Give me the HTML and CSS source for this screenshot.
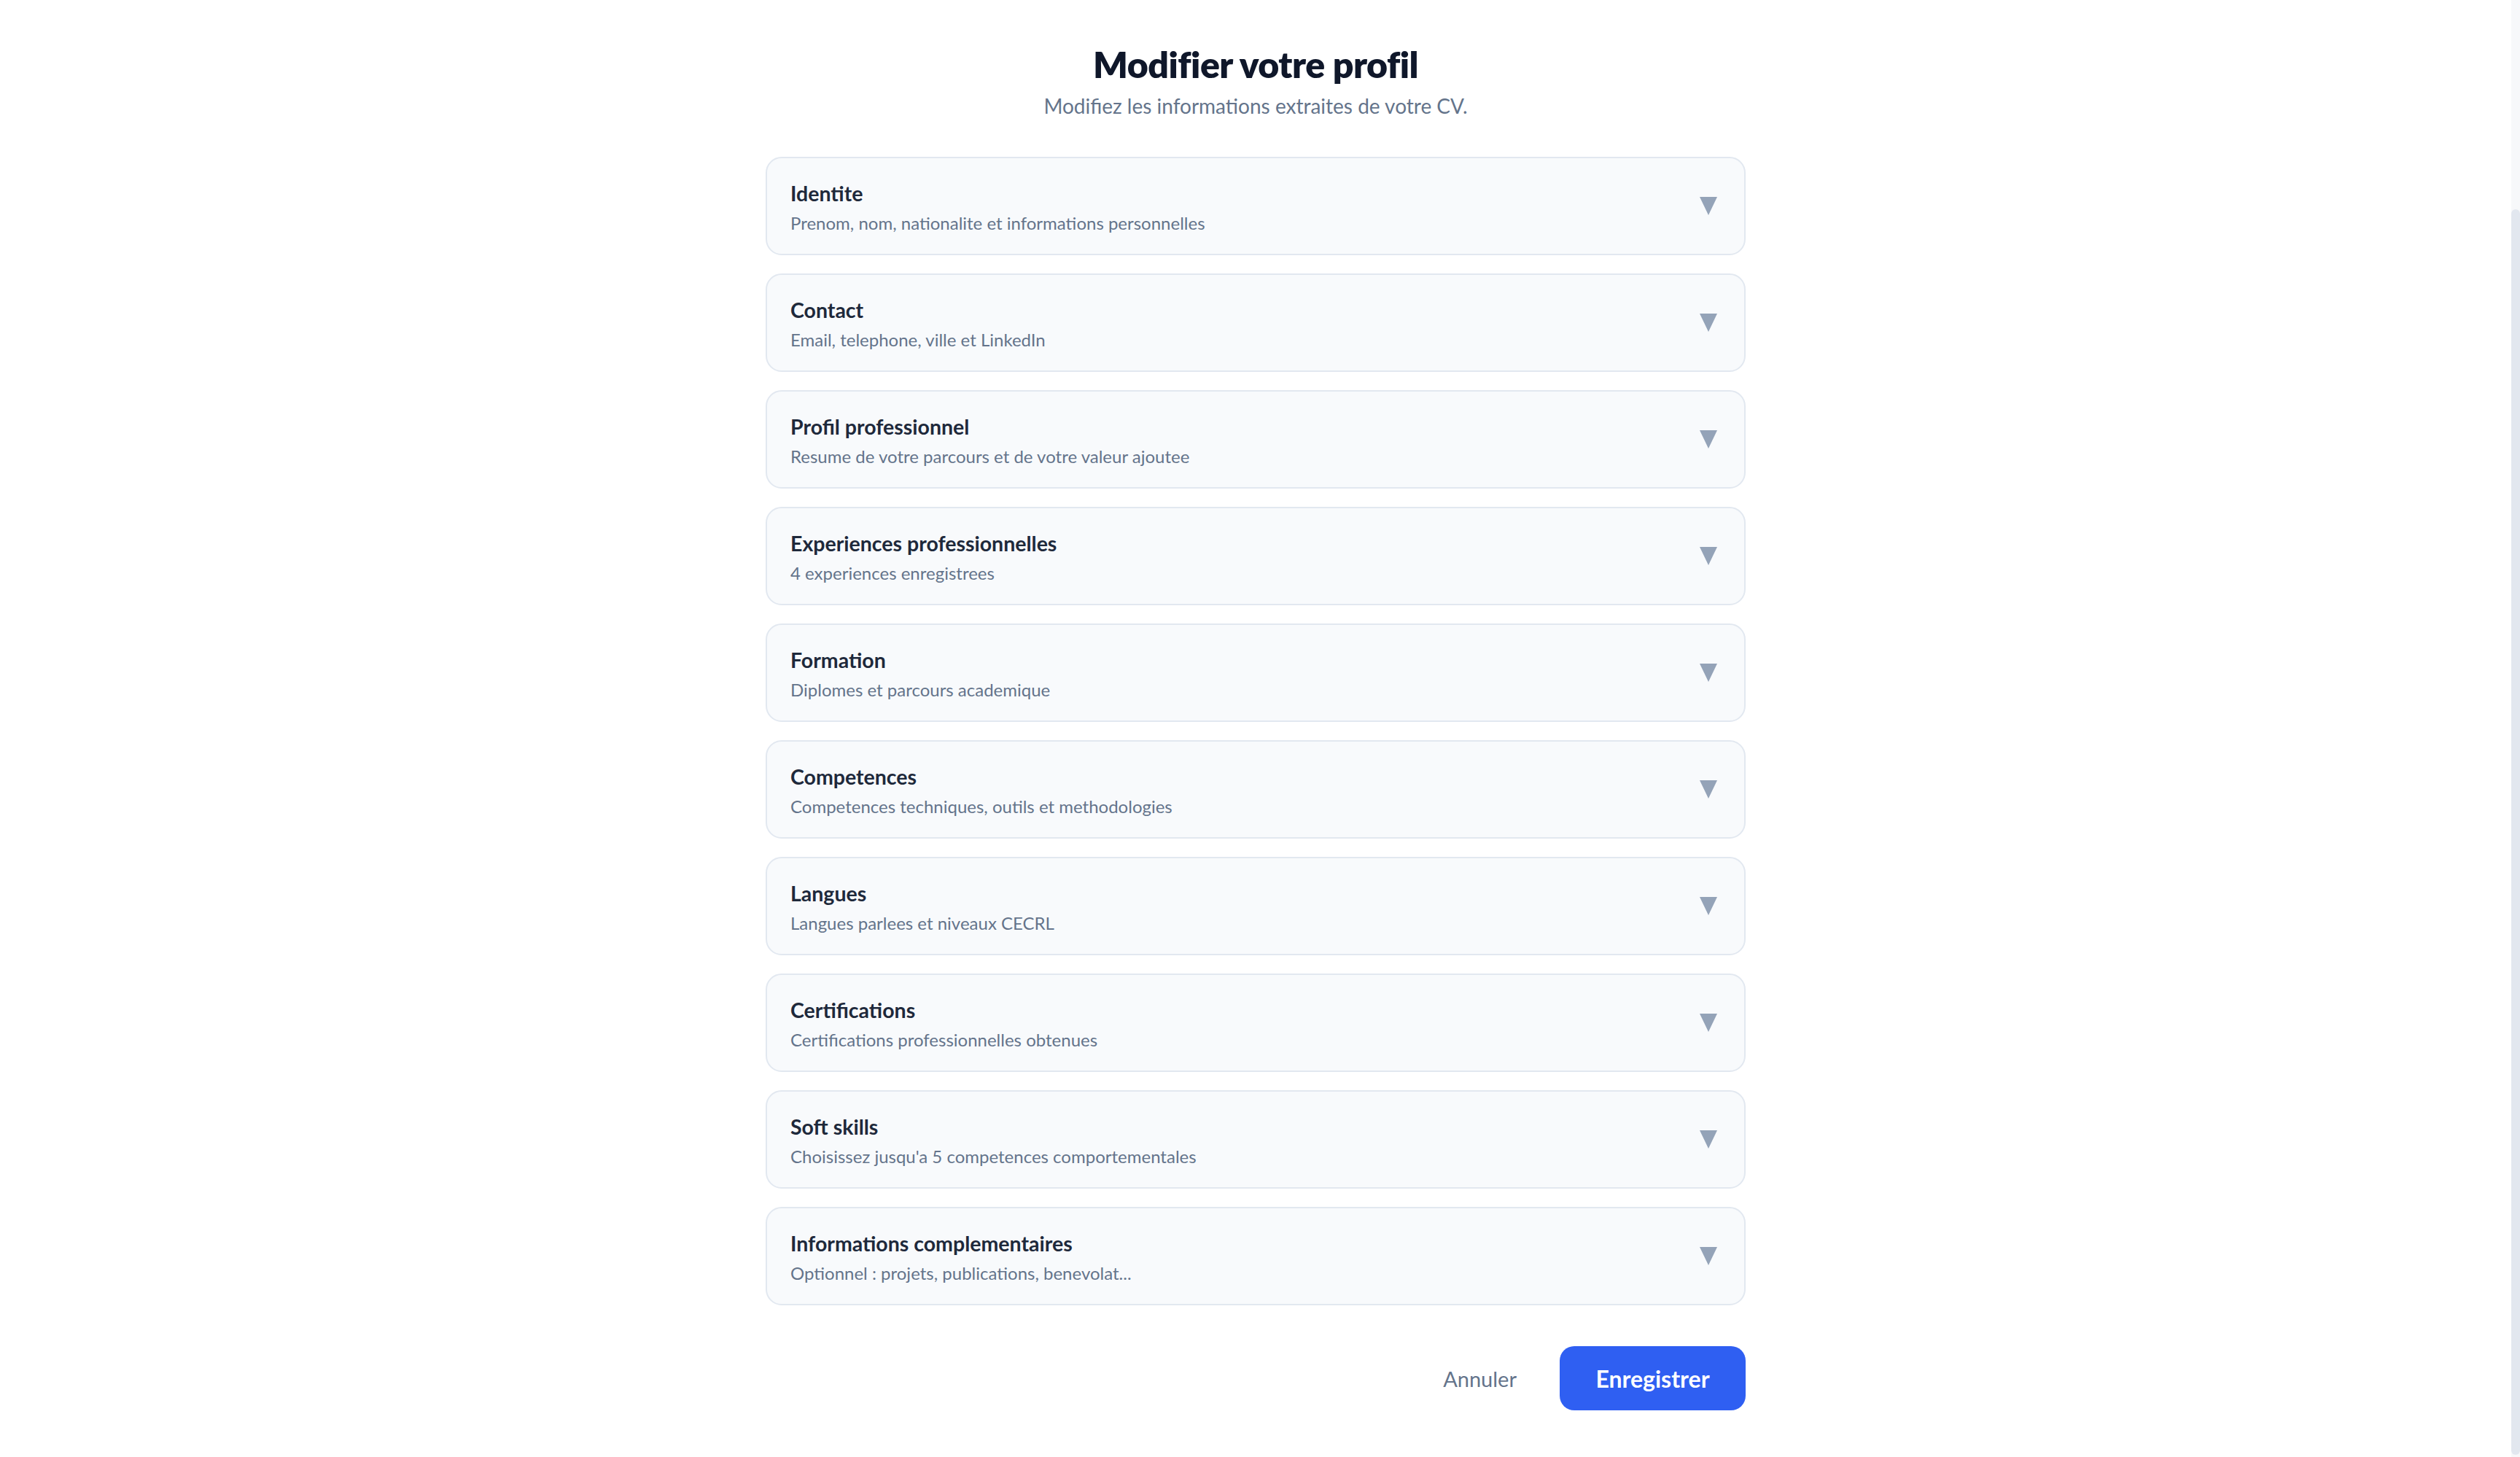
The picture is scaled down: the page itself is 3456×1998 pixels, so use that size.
FILE: index.html
```html
<!DOCTYPE html>
<html lang="fr">
<head>
    <meta charset="UTF-8">
    <meta name="viewport" content="width=device-width, initial-scale=1.0">
    <title>Modifier votre profil</title>
    <link rel="stylesheet" href="styles.css">
</head>
<body>
    <div class="page">
        <div class="editor">
            <h1 class="editor-title">Modifier votre profil</h1>
            <p class="editor-subtitle">Modifiez les informations extraites de votre CV.</p>

            <div class="sections">
                <div class="section">
                    <div class="section-text">
                        <div class="section-name">Identite</div>
                        <div class="section-desc">Prenom, nom, nationalite et informations personnelles</div>
                    </div>
                    <svg class="chevron" viewBox="0 0 24 25"><polygon points="0,0 24,0 12,25"/></svg>
                </div>
                <div class="section">
                    <div class="section-text">
                        <div class="section-name">Contact</div>
                        <div class="section-desc">Email, telephone, ville et LinkedIn</div>
                    </div>
                    <svg class="chevron" viewBox="0 0 24 25"><polygon points="0,0 24,0 12,25"/></svg>
                </div>
                <div class="section">
                    <div class="section-text">
                        <div class="section-name">Profil professionnel</div>
                        <div class="section-desc">Resume de votre parcours et de votre valeur ajoutee</div>
                    </div>
                    <svg class="chevron" viewBox="0 0 24 25"><polygon points="0,0 24,0 12,25"/></svg>
                </div>
                <div class="section">
                    <div class="section-text">
                        <div class="section-name">Experiences professionnelles</div>
                        <div class="section-desc">4 experiences enregistrees</div>
                    </div>
                    <svg class="chevron" viewBox="0 0 24 25"><polygon points="0,0 24,0 12,25"/></svg>
                </div>
                <div class="section">
                    <div class="section-text">
                        <div class="section-name">Formation</div>
                        <div class="section-desc">Diplomes et parcours academique</div>
                    </div>
                    <svg class="chevron" viewBox="0 0 24 25"><polygon points="0,0 24,0 12,25"/></svg>
                </div>
                <div class="section">
                    <div class="section-text">
                        <div class="section-name">Competences</div>
                        <div class="section-desc">Competences techniques, outils et methodologies</div>
                    </div>
                    <svg class="chevron" viewBox="0 0 24 25"><polygon points="0,0 24,0 12,25"/></svg>
                </div>
                <div class="section">
                    <div class="section-text">
                        <div class="section-name">Langues</div>
                        <div class="section-desc">Langues parlees et niveaux CECRL</div>
                    </div>
                    <svg class="chevron" viewBox="0 0 24 25"><polygon points="0,0 24,0 12,25"/></svg>
                </div>
                <div class="section">
                    <div class="section-text">
                        <div class="section-name">Certifications</div>
                        <div class="section-desc">Certifications professionnelles obtenues</div>
                    </div>
                    <svg class="chevron" viewBox="0 0 24 25"><polygon points="0,0 24,0 12,25"/></svg>
                </div>
                <div class="section">
                    <div class="section-text">
                        <div class="section-name">Soft skills</div>
                        <div class="section-desc">Choisissez jusqu'a 5 competences comportementales</div>
                    </div>
                    <svg class="chevron" viewBox="0 0 24 25"><polygon points="0,0 24,0 12,25"/></svg>
                </div>
                <div class="section">
                    <div class="section-text">
                        <div class="section-name">Informations complementaires</div>
                        <div class="section-desc">Optionnel : projets, publications, benevolat...</div>
                    </div>
                    <svg class="chevron" viewBox="0 0 24 25"><polygon points="0,0 24,0 12,25"/></svg>
                </div>
            </div>

            <div class="actions">
                <button class="btn-cancel">Annuler</button>
                <button class="btn-save">Enregistrer</button>
            </div>
        </div>
    </div>
    <div class="scrollbar">
        <div class="scrollbar-thumb"></div>
    </div>
</body>
</html>
```

FILE: styles.css
```css
body {
    margin: 0;
    height: 100vh;
    overflow: hidden;
    display: flex;
    background-color: #ffffff;
    font-family: Lato, "Noto Sans", sans-serif;
    color: #0f172a;
}
.page {
    flex: 1;
    display: flex;
    justify-content: center;
}
.editor {
    width: 1344px;
    padding-top: 60px;
}
.editor-title {
    margin: 0;
    text-align: center;
    font-size: 50px;
    line-height: 56px;
    font-weight: 800;
    letter-spacing: -0.5px;
    color: #0f172a;
}
.editor-subtitle {
    margin: 9px 0 0;
    text-align: center;
    font-size: 28px;
    line-height: 40px;
    color: #64748b;
}
.sections {
    margin-top: 50px;
    display: flex;
    flex-direction: column;
    gap: 25px;
}
.section {
    height: 135px;
    box-sizing: border-box;
    display: flex;
    align-items: center;
    justify-content: space-between;
    padding: 0 37px 0 32px;
    background-color: #f8fafc;
    border: 2px solid #e2e8f0;
    border-radius: 22px;
}
.section-text {
    display: flex;
    flex-direction: column;
    gap: 6px;
    padding-top: 2px;
}
.section-name {
    font-size: 28.5px;
    line-height: 38px;
    font-weight: 700;
    color: #1e293b;
}
.section-desc {
    font-size: 24px;
    line-height: 32px;
    color: #64748b;
}
.chevron {
    width: 24px;
    height: 25px;
    fill: #94a3b8;
}
.actions {
    margin-top: 56px;
    display: flex;
    justify-content: flex-end;
    align-items: center;
    gap: 59px;
}
.btn-cancel {
    background: none;
    border: none;
    padding: 0;
    font-family: inherit;
    font-size: 29px;
    color: #64748b;
    cursor: pointer;
}
.btn-save {
    width: 255px;
    height: 88px;
    border: none;
    border-radius: 20px;
    background-color: #2f5ff2;
    color: #ffffff;
    font-family: inherit;
    font-size: 32px;
    font-weight: 700;
    cursor: pointer;
}
.scrollbar {
    width: 12px;
    display: flex;
    flex-direction: column;
    background-color: #f7f8fa;
    padding: 287px 0 3px;
    box-sizing: border-box;
}
.scrollbar-thumb {
    flex: 1;
    background-color: #e2e7ef;
    border-radius: 6px;
}
```
